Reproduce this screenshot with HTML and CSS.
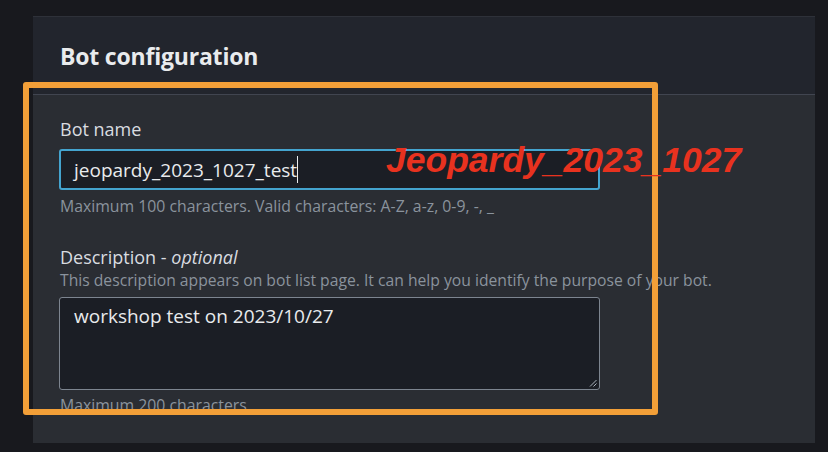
FILE: index.html
```html
<!DOCTYPE html>
<html>
<head>
<meta charset="utf-8">
<link rel="stylesheet" href="styles.css">
</head>
<body>
<div class="page">
  <section class="panel">
    <header class="panel-header">
      <h2 class="title">Bot configuration</h2>
    </header>
    <div class="panel-body">
      <div class="field">
        <label class="label">Bot name</label>
        <div class="input focused"><span class="value">jeopardy_2023_1027_test</span><span class="caret"></span></div>
        <div class="hint">Maximum 100 characters. Valid characters: A-Z, a-z, 0-9, -, _</div>
      </div>
      <div class="field field-desc">
        <label class="label">Description - <i>optional</i></label>
        <div class="desc">This description appears on bot list page. It can help you identify the purpose of your bot.</div>
        <div class="textarea">
          <span class="value">workshop test on 2023/10/27</span>
          <svg class="grip" width="8" height="8" viewBox="0 0 8 8"><path d="M1 7.5L7.5 1M4.5 7.5L7.5 4.5" stroke="#aab2bd" stroke-width="1"/></svg>
        </div>
        <div class="hint hint-last">Maximum 200 characters</div>
      </div>
    </div>
  </section>
  <div class="highlight"></div>
  <div class="annotation">Jeopardy_2023_1027</div>
</div>
</body>
</html>
```
FILE: styles.css
```css
* { box-sizing: border-box; }
html, body { margin: 0; padding: 0; }
body {
  background: #18191e;
  width: 828px;
  height: 452px;
  overflow: hidden;
  font-family: "Open Sans", "Noto Sans", sans-serif;
}
.page {
  position: relative;
  width: 828px;
  height: 452px;
  padding: 16px 13px 0 33px;
}
.panel {
  width: 782px;
  height: 427px;
  background: #2a2d33;
  border-top: 1px solid #2e3139;
  display: flex;
  flex-direction: column;
  overflow: hidden;
}
.panel-header {
  flex: none;
  background: #22252d;
  height: 78px;
  border-bottom: 1px solid #414550;
  padding: 24px 0 0 27px;
}
.title {
  margin: 0;
  color: #e9ebed;
  font-size: 23px;
  font-weight: 700;
  line-height: 30px;
  letter-spacing: -0.2px;
}
.panel-body {
  padding: 22px 0 0 26px;
  display: flex;
  flex-direction: column;
}
.field { display: flex; flex-direction: column; }
.label {
  color: #d9dce0;
  font-size: 18px;
  line-height: 24px;
  padding-left: 1px;
}
.label i { font-style: italic; }
.input {
  margin-top: 8px;
  width: 541px;
  height: 41px;
  background: #1b1e25;
  border: 2px solid #44a4cf;
  border-radius: 3px;
  display: flex;
  align-items: center;
  padding-left: 13px;
  color: #e9ebed;
  font-size: 19px;
  line-height: 26px;
}
.caret {
  display: inline-block;
  width: 1px;
  height: 27px;
  background: #e9ebed;
}
.hint {
  margin-top: 5px;
  color: #8a939d;
  font-size: 15.8px;
  line-height: 22px;
  padding-left: 1px;
}
.field-desc { margin-top: 28px; }
.desc {
  color: #8a939d;
  font-size: 15.7px;
  line-height: 22px;
  padding-left: 1px;
}
.textarea {
  position: relative;
  margin-top: 6px;
  width: 541px;
  height: 93px;
  background: #1b1e25;
  border: 1px solid #7d8590;
  border-radius: 3px;
  padding: 5px 0 0 14px;
  color: #e9ebed;
  font-size: 19px;
  line-height: 26px;
}
.grip { position: absolute; right: 2px; bottom: 2px; }
.hint-last { margin-top: 4px; }
.highlight {
  position: absolute;
  left: 23px;
  top: 82px;
  width: 635px;
  height: 333px;
  border: 6px solid #f29f38;
  border-radius: 3px;
}
.annotation {
  position: absolute;
  left: 386px;
  top: 140px;
  color: #e8321f;
  font-family: "Liberation Sans", Arial, sans-serif;
  font-weight: 700;
  font-style: italic;
  font-size: 35.5px;
  line-height: 40px;
}
```
